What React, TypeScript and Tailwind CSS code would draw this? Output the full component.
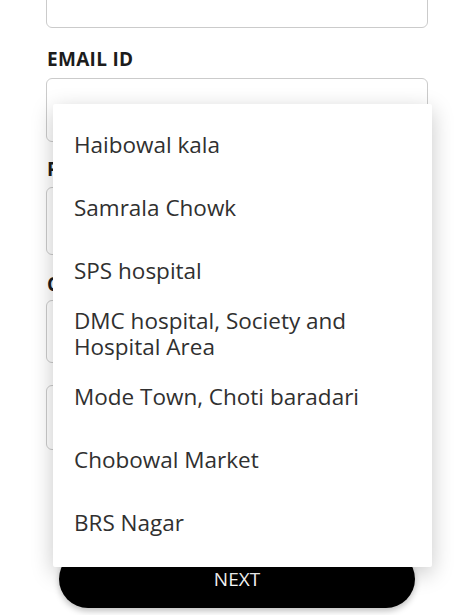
import React from "react";

const items: string[] = [
  "Haibowal kala",
  "Samrala Chowk",
  "SPS hospital",
  "DMC hospital, Society and Hospital Area",
  "Mode Town, Choti baradari",
  "Chobowal Market",
  "BRS Nagar",
];

function Field({ h }: { h: string }) {
  return <div className={`w-full rounded-[6px] border border-[#cbcbcb] bg-white ${h}`} />;
}

export default function App() {
  return (
    <div className="relative h-[615px] w-full overflow-hidden bg-white font-['Open_Sans',sans-serif]">
      <div className="-mt-[36px] flex flex-col px-[46px]">
        <div className="h-[64px] w-full rounded-[6px] border border-[#cbcbcb]" />
        <div className="mt-[20px] pl-[1px] text-[19px] font-bold leading-[22px] tracking-[0.3px] text-[#1c1c1c]">EMAIL ID</div>
        <div className="mt-[8px]">
          <Field h="h-[64px]" />
        </div>
        <div className="mt-[16px] pl-[1px] text-[19px] font-bold leading-[22px] text-[#1c1c1c]">PHONE NUMBER</div>
        <div className="mt-[7px]">
          <Field h="h-[68px]" />
        </div>
        <div className="mt-[18px] pl-[1px] text-[19px] font-bold leading-[22px] text-[#1c1c1c]">CITY</div>
        <div className="mt-[5px]">
          <Field h="h-[63px]" />
        </div>
        <div className="mt-[22px]">
          <Field h="h-[65px]" />
        </div>
        <div className="mx-[13px] mt-[100px] flex h-[58px] items-center justify-center rounded-full bg-black shadow-[0_3px_6px_rgba(0,0,0,0.25)]">
          <span className="text-[19px] leading-none text-white">NEXT</span>
        </div>
      </div>

      <div className="absolute left-[53px] top-[104px] w-[379px] rounded-[2px] bg-white pb-[13px] pt-[9px] shadow-[0_6px_22px_rgba(0,0,0,0.22)]">
        {items.map((t) => (
          <div key={t} className="flex h-[63px] items-center pl-[21px] pr-[30px]">
            <span className="text-[22.5px] leading-[26px] text-[#303030]">{t}</span>
          </div>
        ))}
      </div>
    </div>
  );
}
